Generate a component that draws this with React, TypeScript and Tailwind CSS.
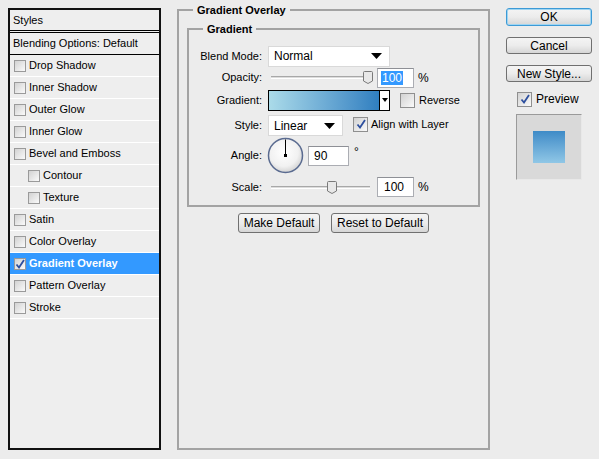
import React from 'react'

const LAYERS: { name: string; sub?: boolean; on?: boolean }[] = [
  { name: 'Drop Shadow' },
  { name: 'Inner Shadow' },
  { name: 'Outer Glow' },
  { name: 'Inner Glow' },
  { name: 'Bevel and Emboss' },
  { name: 'Contour', sub: true },
  { name: 'Texture', sub: true },
  { name: 'Satin' },
  { name: 'Color Overlay' },
  { name: 'Gradient Overlay', on: true },
  { name: 'Pattern Overlay' },
  { name: 'Stroke' },
]

function Tick() {
  return (
    <svg width="10" height="10" viewBox="0 0 10 10" fill="none">
      <polyline points="1.5,5.5 4,8.5 9,1" stroke="#2d4f9e" strokeWidth="1.8" />
    </svg>
  )
}

function Box({ checked, className }: { checked?: boolean; className: string }) {
  return (
    <span
      className={`inline-flex shrink-0 items-center justify-center border border-[#8f8f8f] bg-linear-to-br from-[#d2d2d2] to-[#fafafa] ${className}`}
    >
      {checked && <Tick />}
    </span>
  )
}

function Arrow() {
  return (
    <svg width="11" height="6" viewBox="0 0 11 6">
      <polygon points="0,0 11,0 5.5,6" fill="#000" />
    </svg>
  )
}

function Slider({ pos }: { pos: number }) {
  return (
    <div className="relative ml-[3px] h-[3px] w-[99px] border-t border-[#a8a8a8] border-b border-b-white bg-[#dcdcdc]">
      <svg className="absolute top-[-6px]" style={{ left: pos - 5 }} width="10" height="13" viewBox="0 0 10 13">
        <path d="M1.5 0.5 H8.5 Q9.5 0.5 9.5 1.5 V10 L5 12.5 L0.5 10 V1.5 Q0.5 0.5 1.5 0.5 Z" fill="#e8e8e8" stroke="#7a7a7a" />
      </svg>
    </div>
  )
}

function Field({ children, className }: { children: React.ReactNode; className: string }) {
  return (
    <div className={`flex h-[20px] items-center border border-[#abadb3] border-t-[#8e9096] bg-white text-[12px] ${className}`}>
      {children}
    </div>
  )
}

function Btn({ label, className }: { label: string; className: string }) {
  return (
    <div
      className={`flex items-center justify-center rounded-[3px] border bg-linear-to-b from-[#f4f4f4] via-[#ececec] to-[#d6d6d6] text-[12px] leading-none text-black ${className}`}
    >
      {label}
    </div>
  )
}

export default function App() {
  return (
    <div className="flex h-[459px] w-[599px] bg-[#ececec] font-['Liberation_Sans',Arial,sans-serif] text-[11px] text-black">
      {/* Styles list */}
      <div className="ml-[8px] mt-[8px] flex h-[442px] w-[153px] flex-col border-2 border-[#111] bg-[#eeeeee]">
        <div className="flex h-[23px] items-center border-b-[3px] border-double border-black pl-[3px]">Styles</div>
        <div className="flex h-[22px] items-center border-b border-black pl-[3px]">Blending Options: Default</div>
        {LAYERS.map((l) => (
          <div
            key={l.name}
            className={`flex h-[22px] items-center border-b border-white ${l.sub ? 'pl-[18px]' : 'pl-[4px]'} ${
              l.on ? 'bg-[#3399ff] font-bold text-white' : ''
            }`}
          >
            <Box checked={l.on} className="h-[12px] w-[12px] border-[#9a9a9a]" />
            <span className="ml-[3px]">{l.name}</span>
          </div>
        ))}
      </div>

      {/* Gradient Overlay */}
      <div className="ml-[16px] flex flex-col">
        <fieldset className="mt-[3px] h-[447px] w-[313px] border-2 border-[#a3a3a3] px-[8px]">
          <legend className="ml-[6px] px-[4px] text-[11px] font-bold leading-[14px]">Gradient Overlay</legend>

          <fieldset className="mt-[5px] h-[185px] w-[293px] border-2 border-[#a3a3a3]">
            <legend className="ml-[14px] px-[4px] text-[11px] font-bold leading-[14px]">Gradient</legend>

            <div className="mt-[9px] flex h-[22px] items-center">
              <span className="mr-[6px] w-[73px] text-right">Blend Mode:</span>
              <div className="flex h-[21px] w-[122px] items-center justify-between border border-[#d9d9d9] bg-white pl-[5px] pr-[7px] text-[12px]">
                Normal
                <Arrow />
              </div>
            </div>

            <div className="flex h-[21px] items-center">
              <span className="mr-[6px] w-[73px] text-right">Opacity:</span>
              <Slider pos={97} />
              <Field className="ml-[7px] w-[37px] pl-[3px]">
                <span className="bg-[#3399ff] px-[1px] leading-[14px] text-white">100</span>
              </Field>
              <span className="ml-[4px] text-[12px]">%</span>
            </div>

            <div className="mt-[1px] flex h-[22px] items-center">
              <span className="mr-[6px] w-[73px] text-right">Gradient:</span>
              <div className="flex h-[21px] w-[122px] border border-black">
                <div className="flex-1 bg-linear-to-r from-[#abdbe9] to-[#2f7fc0]" />
                <div className="flex w-[10px] items-center justify-center border-l border-black bg-white">
                  <svg width="6" height="4" viewBox="0 0 6 4">
                    <polygon points="0,0 6,0 3,4" fill="#000" />
                  </svg>
                </div>
              </div>
              <Box className="ml-[10px] h-[15px] w-[15px]" />
              <span className="ml-[4px]">Reverse</span>
            </div>

            <div className="mt-[3px] flex h-[23px] items-center">
              <span className="mr-[6px] w-[73px] text-right">Style:</span>
              <div className="flex h-[21px] w-[75px] items-center justify-between border border-[#d9d9d9] bg-white pl-[5px] pr-[7px] text-[12px]">
                Linear
                <Arrow />
              </div>
              <Box checked className="mb-[3px] ml-[10px] h-[15px] w-[15px]" />
              <span className="mb-[3px] ml-[3px]">Align with Layer</span>
            </div>

            <div className="flex h-[37px] items-center">
              <span className="mr-[5px] w-[73px] text-right">Angle:</span>
              <svg width="37" height="37" viewBox="0 0 37 37">
                <defs>
                  <radialGradient id="dial" cx="0.45" cy="0.4" r="0.6">
                    <stop offset="0" stopColor="#ffffff" />
                    <stop offset="0.7" stopColor="#f1f1f1" />
                    <stop offset="1" stopColor="#d4d4d4" />
                  </radialGradient>
                </defs>
                <circle cx="18.5" cy="18.5" r="17" fill="url(#dial)" stroke="#5a6b90" strokeWidth="1.5" />
                <line x1="18.5" y1="18.5" x2="18.5" y2="2.5" stroke="#000" strokeWidth="1" />
                <rect x="17" y="17" width="3" height="3" fill="#000" />
              </svg>
              <Field className="ml-[4px] w-[41px] pl-[5px]">90</Field>
              <span className="mb-[8px] ml-[5px] text-[12px]">°</span>
            </div>

            <div className="mt-[2px] flex h-[22px] items-center">
              <span className="mr-[6px] w-[73px] text-right">Scale:</span>
              <Slider pos={61} />
              <Field className="ml-[7px] w-[37px] pl-[6px]">100</Field>
              <span className="ml-[4px] text-[12px]">%</span>
            </div>
          </fieldset>

          <div className="mt-[6px] flex justify-center gap-[11px]">
            <Btn label="Make Default" className="h-[20px] w-[82px] border-[#707070]" />
            <Btn label="Reset to Default" className="h-[20px] w-[98px] border-[#707070]" />
          </div>
        </fieldset>
      </div>

      {/* Buttons + preview */}
      <div className="ml-[16px] mt-[8px] flex w-[86px] flex-col">
        <Btn label="OK" className="h-[18px] border-[#3c9ad6] shadow-[inset_0_0_0_1px_#9fd5f2]" />
        <Btn label="Cancel" className="mt-[11px] h-[17px] border-[#707070]" />
        <Btn label="New Style..." className="mt-[11px] h-[17px] border-[#707070]" />
        <div className="ml-[11px] mt-[8px] flex items-center">
          <Box checked className="h-[15px] w-[15px]" />
          <span className="ml-[4px] text-[12px]">Preview</span>
        </div>
        <div className="ml-[10px] mt-[6px] flex h-[66px] w-[66px] items-center justify-center border border-[#9a9a9a] border-r-[#e8e8e8] border-b-[#e8e8e8] bg-[#d9d9d9]">
          <div className="h-[32px] w-[32px] bg-linear-to-b from-[#3e8bc7] to-[#90c7e6]" />
        </div>
      </div>
    </div>
  )
}
